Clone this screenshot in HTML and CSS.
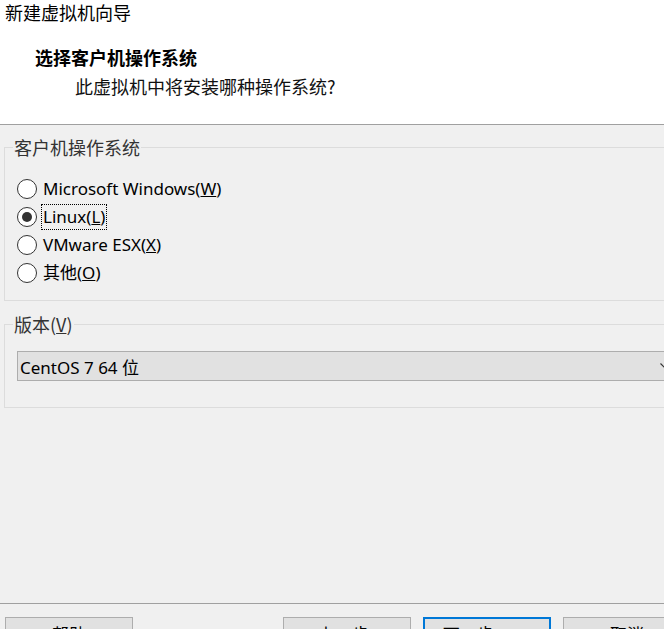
FILE: index.html
```html
<!DOCTYPE html>
<html lang="zh-CN">
<head>
<meta charset="utf-8">
<title>新建虚拟机向导</title>
<link rel="stylesheet" href="styles.css">
</head>
<body>
<div class="window">
  <header class="header">
    <div class="title">新建虚拟机向导</div>
    <h1 class="heading">选择客户机操作系统</h1>
    <p class="subtitle">此虚拟机中将安装哪种操作系统?</p>
  </header>
  <main class="content">
    <fieldset class="group group-os">
      <legend class="legend">客户机操作系统</legend>
      <div class="radio-list">
        <label class="radio-row"><span class="radio"></span><span class="radio-text">Microsoft Windows(<u>W</u>)</span></label>
        <label class="radio-row"><span class="radio checked"></span><span class="radio-text focused">Linux(<u>L</u>)</span></label>
        <label class="radio-row"><span class="radio"></span><span class="radio-text">VMware ESX(<u>X</u>)</span></label>
        <label class="radio-row"><span class="radio"></span><span class="radio-text">其他(<u>O</u>)</span></label>
      </div>
    </fieldset>
    <fieldset class="group group-ver">
      <legend class="legend">版本(<u>V</u>)</legend>
      <div class="combo">
        <span class="combo-text">CentOS 7 64 位</span>
        <svg class="combo-arrow" width="9" height="6" viewBox="0 0 9 6"><path d="M0.5 0.5 L4.5 4.5 L8.5 0.5" fill="none" stroke="#333" stroke-width="1.2"/></svg>
      </div>
    </fieldset>
  </main>
  <footer class="footer">
    <button class="btn btn-help">帮助</button>
    <button class="btn">&lt; 上一步(<u>B</u>)</button>
    <button class="btn btn-default">下一步(<u>N</u>) &gt;</button>
    <button class="btn">取消</button>
  </footer>
</div>
</body>
</html>
```

FILE: styles.css
```css
html, body {
  margin: 0;
  padding: 0;
}
body {
  width: 664px;
  height: 629px;
  overflow: hidden;
  background: #f0f0f0;
  font-family: "Noto Sans", "Noto Sans CJK SC", sans-serif;
  color: #000;
}
.window {
  display: flex;
  flex-direction: column;
  height: 629px;
}
.header {
  background: #fff;
  height: 125px;
  border-bottom: 1px solid #a0a0a0;
  box-sizing: border-box;
  flex: none;
}
.title {
  font-family: "Noto Sans CJK SC", sans-serif;
  font-size: 18px;
  line-height: 24px;
  padding-left: 5px;
  padding-top: 0;
}
.heading {
  margin: 0;
  font-family: "Noto Sans CJK SC", sans-serif;
  font-weight: bold;
  font-size: 18px;
  line-height: 24px;
  padding-left: 35px;
  margin-top: 21px;
}
.subtitle {
  margin: 5px 0 0;
  font-family: "Noto Sans CJK SC", sans-serif;
  font-size: 18px;
  line-height: 24px;
  padding-left: 75px;
  color: #111;
}
.content {
  flex: 1;
  padding-left: 4px;
}
.group {
  width: 686px;
  box-sizing: border-box;
  border: 1px solid #dcdcdc;
  margin: 10px 0 0;
  padding: 0 0 0 12px;
  min-width: 0;
}
.group-ver {
  margin-top: 11px;
}
.legend {
  font-family: "Noto Sans CJK SC", sans-serif;
  font-size: 18px;
  line-height: 24px;
  padding: 0 1px;
  margin-left: -4px;
  color: #333;
}
.group-os {
  padding-top: 16px;
  padding-bottom: 13px;
}
.radio-list {
  display: flex;
  flex-direction: column;
}
.radio-row {
  display: flex;
  align-items: center;
  height: 28px;
  gap: 4px;
}
.radio {
  width: 20px;
  height: 20px;
  box-sizing: border-box;
  border: 1px solid #333;
  border-radius: 50%;
  background: #fff;
  display: flex;
  align-items: center;
  justify-content: center;
  flex: none;
}
.radio.checked::after {
  content: "";
  width: 10px;
  height: 10px;
  border-radius: 50%;
  background: #333;
}
.radio-text {
  font-size: 17px;
  line-height: 22px;
  padding: 1px 1px;
  border: 1px dotted transparent;
}
.radio-text.focused {
  border-color: #000;
}
.group-ver {
  padding-top: 15px;
  padding-bottom: 26px;
}
.combo {
  width: 660px;
  height: 30px;
  box-sizing: border-box;
  border: 1px solid #adadad;
  background: #e1e1e1;
  display: flex;
  align-items: center;
  justify-content: space-between;
  padding: 0 7px 0 2px;
}
.combo-text {
  font-size: 17px;
}
.footer {
  flex: none;
  height: 26px;
  box-sizing: border-box;
  border-top: 1px solid #a0a0a0;
  padding: 13px 0 0 5px;
  display: flex;
  align-items: flex-start;
  gap: 12px;
}
.btn {
  flex: none;
  width: 128px;
  height: 32px;
  box-sizing: border-box;
  border: 1px solid #adadad;
  background: #e1e1e1;
  font-family: "Noto Sans", "Noto Sans CJK SC", sans-serif;
  font-size: 17px;
  color: #000;
  padding: 0;
}
.btn-help {
  margin-right: 138px;
}
.btn-default {
  border: 2px solid #0078d7;
}
```
